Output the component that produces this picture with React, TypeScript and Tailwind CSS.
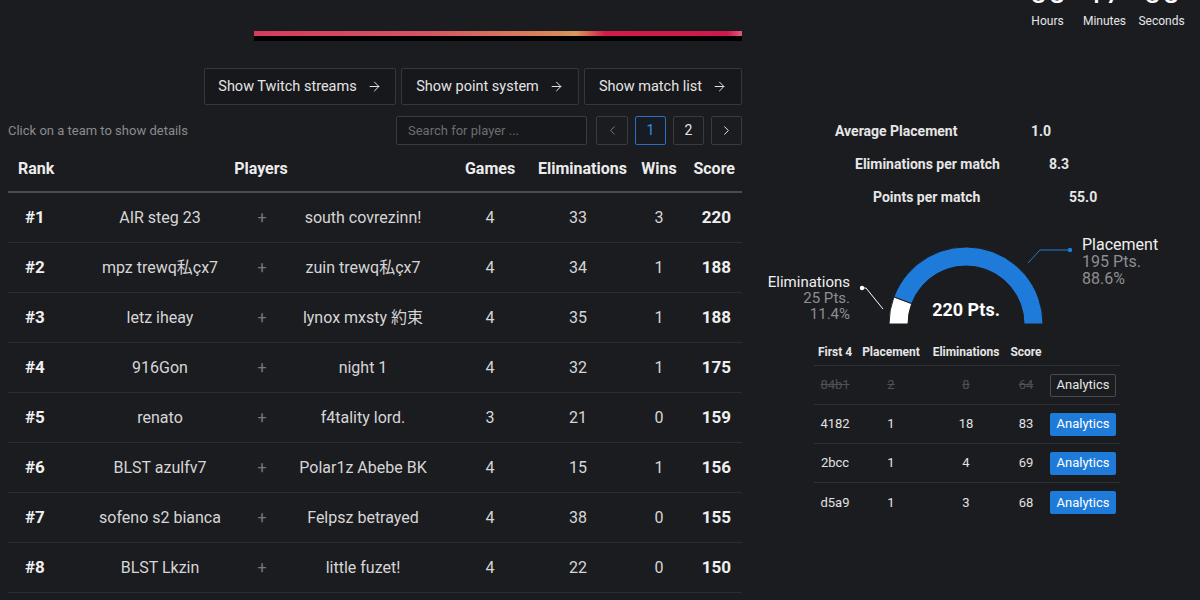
import React from "react";
import { ArrowRight, ChevronLeft, ChevronRight } from "lucide-react";

const rows = [
  ["#1", "AIR steg 23", "south covrezinn!", "4", "33", "3", "220"],
  ["#2", "mpz trewq私çx7", "zuin trewq私çx7", "4", "34", "1", "188"],
  ["#3", "letz iheay", "lynox mxsty 約束", "4", "35", "1", "188"],
  ["#4", "916Gon", "night 1", "4", "32", "1", "175"],
  ["#5", "renato", "f4tality lord.", "3", "21", "0", "159"],
  ["#6", "BLST azulfv7", "Polar1z Abebe BK", "4", "15", "1", "156"],
  ["#7", "sofeno s2 bianca", "Felpsz betrayed", "4", "38", "0", "155"],
  ["#8", "BLST Lkzin", "little fuzet!", "4", "22", "0", "150"],
  ["#9", "", "", "", "", "", ""],
];

const matches = [
  ["84b1", "2", "8", "64", true],
  ["4182", "1", "18", "83", false],
  ["2bcc", "1", "4", "69", false],
  ["d5a9", "1", "3", "68", false],
] as const;

const grid = "grid grid-cols-[72px_160px_44px_158px_96px_80px_82px_42px]";
const sgrid = "grid grid-cols-[42px_70px_80px_40px_74px]";

const buttons = [
  ["Show Twitch streams", "w-[192px]"],
  ["Show point system", "w-[178px]"],
  ["Show match list", "w-[158px]"],
];

export default function App() {
  return (
    <div
      className="w-[1200px] h-[600px] overflow-hidden bg-[#1b1c20] text-[#d6d6d6]"
      style={{ fontFamily: 'Roboto, "Noto Sans CJK JP", sans-serif' }}
    >
      {/* top */}
      <div className="flex h-[60px] justify-between">
        <div className="ml-[254px] mt-[31px] w-[488px]">
          <div className="h-[5px] bg-[linear-gradient(90deg,#d43c5c_0%,#d45462_35%,#d8875a_62%,#d89a58_66%,#d41a48_72%,#cc1a4c_97%,#e05a80_100%)]" />
          <div className="h-[5px] bg-black" />
        </div>
        <div className="flex pr-[10px]">
          {[
            ["05", "Hours"],
            ["17", "Minutes"],
            ["05", "Seconds"],
          ].map(([n, l]) => (
            <div key={l} className="w-[57px] flex flex-col items-center">
              <div className="h-[32px] mt-[-24px] text-[32px] leading-[32px] text-white">{n}</div>
              <div className="mt-[5px] text-[12px] leading-[16px] text-[#e6e6e6]">{l}</div>
            </div>
          ))}
        </div>
      </div>

      <div className="flex">
        {/* left column */}
        <div className="ml-[8px] w-[734px]">
          <div className="mt-[8px] flex justify-end gap-[5px]">
            {buttons.map(([t, w]) => (
              <div
                key={t}
                className={`${w} h-[37px] flex items-center justify-center gap-[10px] border border-[#36373c] bg-[#17181b] text-[14.5px] text-[#e4e4e4] rounded-[2px]`}
              >
                <span>{t}</span>
                <ArrowRight size={15} strokeWidth={1.6} />
              </div>
            ))}
          </div>

          <div className="mt-[11px] h-[29px] flex items-center">
            <div className="text-[13px] text-[#8a8b8f]">Click on a team to show details</div>
            <div className="ml-auto flex items-center">
              <div className="w-[191px] h-[29px] border border-[#3a3b40] bg-[#17181b] rounded-[2px] flex items-center pl-[11px] text-[13px] text-[#6c6d72]">
                Search for player ...
              </div>
              <div className="ml-[9px] flex gap-[7px]">
                <div className="w-[32px] h-[29px] border border-[#3a3b40] rounded-[2px] flex items-center justify-center text-[#7a7b80]">
                  <ChevronLeft size={15} strokeWidth={1.6} />
                </div>
                <div className="w-[31px] h-[29px] border border-[#2a6fc4] bg-[#161b24] rounded-[2px] flex items-center justify-center text-[14px] text-[#3b8de6]">
                  1
                </div>
                <div className="w-[31px] h-[29px] border border-[#3a3b40] rounded-[2px] flex items-center justify-center text-[14px] text-[#e4e4e4]">
                  2
                </div>
                <div className="w-[31px] h-[29px] border border-[#3a3b40] rounded-[2px] flex items-center justify-center text-[#e4e4e4]">
                  <ChevronRight size={15} strokeWidth={1.6} />
                </div>
              </div>
            </div>
          </div>

          {/* table header */}
          <div className={`${grid} mt-[5px] h-[43px] items-center pb-[4px] border-b-2 border-[#4a4b50] text-[16px] font-bold text-[#ececec]`}>
            <div className="pl-[10px]">Rank</div>
            <div className="col-span-3 text-center">Players</div>
            <div className="text-center">Games</div>
            <div className="text-center whitespace-nowrap">Eliminations</div>
            <div className="text-center">Wins</div>
            <div className="flex justify-end pr-[7px] whitespace-nowrap">Score</div>
          </div>

          {rows.map((r) => (
            <div
              key={r[0]}
              className={`${grid} h-[50px] items-center border-b border-[#2c2d32] text-[16px]`}
            >
              <div className="pl-[17px] font-bold text-[17px] text-[#efefef]">{r[0]}</div>
              <div className="text-center whitespace-nowrap">{r[1]}</div>
              <div className="text-center text-[#76777c]">{r[1] ? "+" : ""}</div>
              <div className="text-center whitespace-nowrap">{r[2]}</div>
              <div className="text-center">{r[3]}</div>
              <div className="text-center">{r[4]}</div>
              <div className="text-center">{r[5]}</div>
              <div className="text-right pr-[11px] font-bold text-[17px] text-[#efefef]">{r[6]}</div>
            </div>
          ))}
        </div>

        {/* right column */}
        <div className="flex-1 pt-[55px]">
          <div className="h-[33px] flex items-center text-[14px] font-bold text-[#e6e6e6]">
            <div className="ml-[93px] w-[196px]">Average Placement</div>
            <div>1.0</div>
          </div>
          <div className="h-[33px] flex items-center text-[14px] font-bold text-[#e6e6e6]">
            <div className="ml-[113px] w-[194px]">Eliminations per match</div>
            <div>8.3</div>
          </div>
          <div className="h-[33px] flex items-center text-[14px] font-bold text-[#e6e6e6]">
            <div className="ml-[131px] w-[196px]">Points per match</div>
            <div>55.0</div>
          </div>

          {/* gauge */}
          <div className="relative mt-[16px] h-[100px]">
            <svg className="absolute left-0 top-0" width="458" height="100" viewBox="0 0 458 100">
              <path
                d="M 151.87 67.03 A 77 77 0 0 1 301 94 L 282 94 A 58 58 0 0 0 169.67 73.69 Z"
                fill="#1f7bd9"
                stroke="#1b1c20"
                strokeWidth="1"
              />
              <path
                d="M 147 94 A 77 77 0 0 1 151.87 67.03 L 169.67 73.69 A 58 58 0 0 0 166 94 Z"
                fill="#ffffff"
                stroke="#1b1c20"
                strokeWidth="1"
              />
              <polyline points="286,33 298,20 328,20" fill="none" stroke="#1f7bd9" strokeWidth="1" />
              <circle cx="328" cy="20" r="2.2" fill="#1f7bd9" />
              <polyline points="120,58 124,58 141,79" fill="none" stroke="#ffffff" strokeWidth="1" />
              <circle cx="120" cy="58" r="2.2" fill="#ffffff" />
            </svg>
            <div className="absolute left-[174px] w-[100px] top-[69px] text-center text-[18px] leading-[22px] font-bold text-white">
              220 Pts.
            </div>
            <div className="absolute left-[340px] top-[6px] text-[16px] leading-[17px]">
              <div className="text-[#f0f0f0]">Placement</div>
              <div className="text-[#8d8e92]">195 Pts.</div>
              <div className="text-[#8d8e92]">88.6%</div>
            </div>
            <div className="absolute right-[350px] top-[44px] text-right text-[15px] leading-[16px]">
              <div className="text-[#f0f0f0]">Eliminations</div>
              <div className="text-[#8d8e92]">25 Pts.</div>
              <div className="text-[#8d8e92]">11.4%</div>
            </div>
          </div>

          {/* matches table */}
          <div className="ml-[72px] mt-[9px] w-[306px]">
            <div className={`${sgrid} h-[27px] items-center border-b border-[#2f3035] text-[12px] font-bold text-[#e6e6e6]`}>
              <div className="text-center whitespace-nowrap">First 4</div>
              <div className="text-center">Placement</div>
              <div className="text-center">Eliminations</div>
              <div className="text-center">Score</div>
              <div />
            </div>
            {matches.map((m, i) => (
              <div
                key={m[0]}
                className={`${sgrid} h-[39px] items-center text-[13px] ${
                  i < matches.length - 1 ? "border-b border-[#2f3035]" : ""
                } ${m[4] ? "text-[#4f5055]" : "text-[#e2e2e2]"}`}
              >
                <div className={`text-center ${m[4] ? "line-through" : ""}`}>{m[0]}</div>
                <div className={`text-center ${m[4] ? "line-through" : ""}`}>{m[1]}</div>
                <div className={`text-center ${m[4] ? "line-through" : ""}`}>{m[2]}</div>
                <div className={`text-center ${m[4] ? "line-through" : ""}`}>{m[3]}</div>
                <div className="flex justify-center">
                  {m[4] ? (
                    <div className="w-[66px] h-[23px] border border-[#4a4b50] rounded-[2px] flex items-center justify-center text-[13px] text-[#e6e6e6]">
                      Analytics
                    </div>
                  ) : (
                    <div className="w-[66px] h-[23px] bg-[#1f7bd9] rounded-[2px] flex items-center justify-center text-[13px] text-white">
                      Analytics
                    </div>
                  )}
                </div>
              </div>
            ))}
          </div>
        </div>
      </div>
    </div>
  );
}
